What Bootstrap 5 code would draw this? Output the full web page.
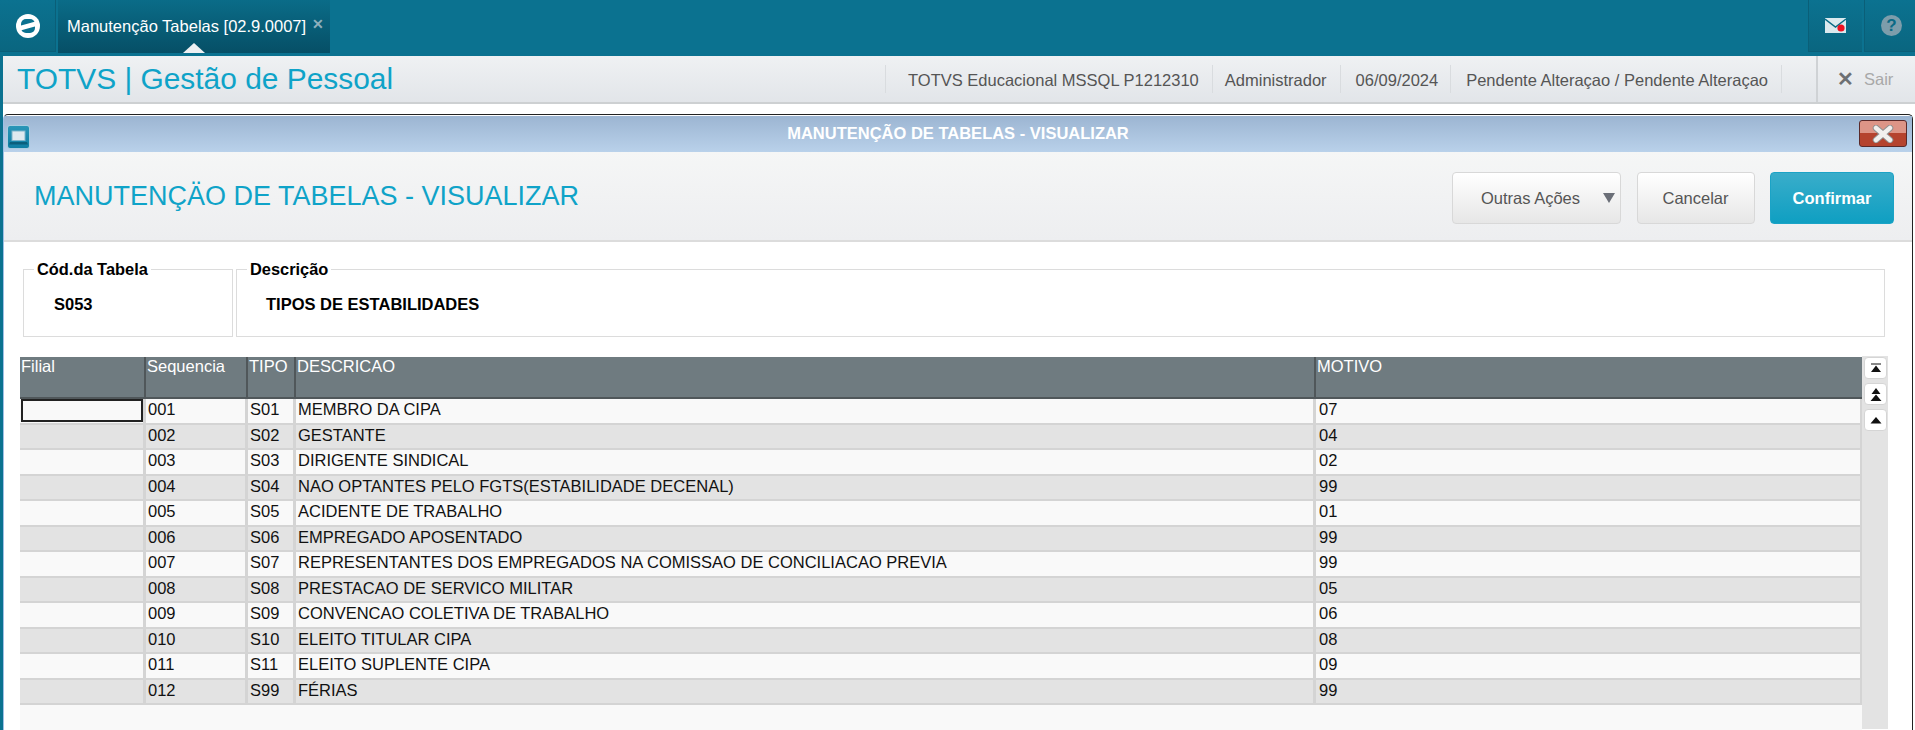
<!DOCTYPE html>
<html lang="pt-BR">
<head>
<meta charset="utf-8">
<title>Manutenção Tabelas</title>
<link href="https://cdn.jsdelivr.net/npm/bootstrap@5.3.0/dist/css/bootstrap.min.css" rel="stylesheet">
<style>
html,body{height:730px;overflow:hidden;background:#fff;font-family:"Liberation Sans",Arial,sans-serif;}
.topbar{height:56px;background:#0b7290;}
.logo-tile{width:56px;height:52px;background:linear-gradient(#0b7290,#0a6680);border-right:1px solid #0a5f78;border-bottom:1px solid #0a5f78;}
.app-tab{width:272px;height:53px;margin-left:2px;background:linear-gradient(#0a6c88,#064f66);color:#fff;font-size:16.5px;padding-left:9px;position:relative;}
.app-tab .tab-x{color:#8fb0bc;font-size:14px;font-weight:700;margin-left:6px;margin-top:-4px;}
.tab-arrow{position:absolute;left:125px;bottom:0;width:0;height:0;border-left:11px solid transparent;border-right:11px solid transparent;border-bottom:10px solid #eef0f2;}
.side-tile{width:54px;height:52px;background:linear-gradient(#0b7290,#0a6680);border-bottom:1px solid #0a5f78;border-left:1px solid #0a5f78;}
.help-tile{width:51px;margin-left:2px;padding-left:3px;}
.help-dot{width:21px;height:21px;border-radius:50%;background:#7d9dab;color:#0b6a85;font-weight:700;font-size:17px;line-height:21px;text-align:center;}
.stage{border-left:3px solid #0b7290;height:674px;}
.appbar{height:48px;background:linear-gradient(#eff1f3,#e2e5e9);border-bottom:2px solid #cdd0d2;}
.app-name{font-size:29.9px;color:#0fa3c8;padding-left:14px;line-height:46px;}
.info-cell{font-size:16.5px;color:#555;padding:2px 13px 0 15px;height:28px;line-height:27px;border-left:1px solid #d9dcdf;white-space:nowrap;}
.info-cell.first-info{padding-left:22px;}
.info-cell.admin-info{padding-left:12px;}
.info-cell.date-info{padding-right:12px;}
.info-cell.last-info{border-right:1px solid #d9dcdf;padding-right:13px;padding-left:15px;}
.sair-cell{width:99px;height:46px;margin-left:34px;border-left:2px solid #cfd2d5;color:#a8a8a8;font-size:16.5px;padding-left:19px;}
.sair-x{color:#6d7073;font-size:20px;font-weight:700;margin-right:10px;line-height:1;}
.win{margin-top:10px;margin-right:2px;height:616px;border:1px solid #222;border-bottom:0;border-radius:5px 5px 0 0;border-left-color:#9fc0e6;background:#fff;}
.win-title{height:36px;margin-top:1px;padding-bottom:2px;background:linear-gradient(#9cb5d2,#b9d1ea);color:#fff;font-weight:700;font-size:16.5px;position:relative;}
.win-ico{position:absolute;left:3px;top:9px;width:23px;height:24px;border-radius:3px;background:linear-gradient(#2a96b8,#0f7ea3);border:1px solid #a9cde0;}
.win-close{position:absolute;right:5px;top:4px;width:48px;height:27px;border:1px solid #5a2a2a;border-radius:3px;background:linear-gradient(#dd9587 0 48%,#b5432e 48% 100%);}
.form-head{height:90px;background:linear-gradient(#f5f6f6,#edeef0);border-bottom:2px solid #dcdcdc;padding:4px 18px 0 30px;}
.form-title{font-size:27px;color:#0fa3c8;margin-bottom:4px;}
.act-gap{gap:15.5px;}
.act-btn{height:52px;font-size:16.5px;color:#555;border:1px solid #d8d8d8;border-radius:4px;background:linear-gradient(#fff,#e6e6e6);padding:0;}
.act-more{width:169px;text-align:left;padding-left:28px;position:relative;}
.act-more::after{content:"";position:absolute;right:5px;top:20px;border-left:6px solid transparent;border-right:6px solid transparent;border-top:10px solid #6b6f78;}
.act-cancel{width:118px;}
.act-ok{width:124px;color:#fff;font-weight:700;border-color:#1ba3c6;background:linear-gradient(#39adca,#0f9fc2);}
.fields{padding:27px 27px 0 19px;gap:3px;}
.fset{height:68px;border:1px solid #dcdcdc;padding:24px 0 0 29px;position:relative;font-size:16.5px;font-weight:700;color:#000;line-height:20px;}
.fset-code{width:210px;padding-left:30px;}
.fset-desc{width:1649px;}
.fset-leg{position:absolute;left:10px;top:-10px;background:#fff;padding:0 3px;font-size:16.4px;line-height:18px;}
.grid-wrap{padding:20px 0 0 16px;}
.grid-main{width:1842px;height:373px;background:#f9f9f9;}
.grid-row{height:25.5px;font-size:16.5px;color:#111;background:#f9f9f9;border-bottom:2px solid #d4d4d4;line-height:21px;}
.grid-row.alt{background:#e3e3e3;}
.grid-head{height:42px;background:#6f7b80;color:#fff;border-bottom:2px solid #50575a;}
.gc{padding:0 0 0 2px;overflow:hidden;white-space:nowrap;border-right:3px solid #d4d4d4;height:100%;}
.grid-head .gc{border-right:2px solid #50575a;padding-left:1px;line-height:18px;}
.grid-head .c2{padding-left:1px;}
.c1{width:126px;flex:none;}.c2{width:102px;flex:none;}.c3{width:48px;flex:none;}.c4{width:1020px;flex:none;}.c5{flex:1 1 0;border-right:2px solid #d4d4d4;padding-left:3px;}
.grid-head .c5{border-right:0;}
.focus-cell{outline:2px solid #222;outline-offset:-2px;height:23px;width:122px;margin-left:1px;}
.scroller{width:26px;height:373px;background:#e3e3e3;padding:1px 0 0 2px;margin-top:-1px;}
.scroll-btn{width:23px;height:22px;background:#fff;border:1px solid #d5d5d5;border-radius:4px;margin-bottom:4px;padding:0;}
</style>
</head>
<body>
<header class="topbar d-flex justify-content-between">
  <div class="d-flex">
    <div class="logo-tile d-flex align-items-center justify-content-center">
      <svg width="24" height="24" viewBox="0 0 24 24"><circle cx="12" cy="12" r="12" fill="#fff"/><rect x="5" y="5" width="14" height="14" rx="5" fill="#0b7290"/><path d="M3 14.500 L21 9.500" stroke="#fff" stroke-width="4.500"/></svg>
    </div>
    <div class="app-tab d-flex align-items-center">Manutenção Tabelas [02.9.0007]<span class="tab-x">✕</span><span class="tab-arrow"></span></div>
  </div>
  <div class="d-flex">
    <div class="side-tile d-flex align-items-center justify-content-center">
      <svg width="22" height="16" viewBox="0 0 22 16"><rect width="21" height="15" fill="#dbe9ee"/><path d="M0 1 L10.500 9 L21 1" fill="none" stroke="#0a6a85" stroke-width="1.400"/><circle cx="16" cy="10" r="3.600" fill="#f01020"/></svg>
    </div>
    <div class="side-tile help-tile d-flex align-items-center justify-content-center"><div class="help-dot">?</div></div>
  </div>
</header>
<div class="stage">
  <div class="appbar d-flex align-items-center justify-content-between">
    <div class="app-name">TOTVS | Gestão de Pessoal</div>
    <div class="d-flex align-items-center">
      <div class="info-cell first-info">TOTVS Educacional MSSQL P1212310</div>
      <div class="info-cell admin-info">Administrador</div>
      <div class="info-cell date-info">06/09/2024</div>
      <div class="info-cell last-info">Pendente Alteraçao / Pendente Alteraçao</div>
      <div class="sair-cell d-flex align-items-center"><span class="sair-x">✕</span>Sair</div>
    </div>
  </div>
  <section class="win">
    <div class="win-title d-flex align-items-center justify-content-center">
      <span class="win-ico d-flex align-items-center justify-content-center"><svg width="19" height="15" viewBox="0 0 19 15"><rect x="3" y="1" width="13" height="9.500" fill="#dfeaef" stroke="#7fb6cc"/><path d="M1 12h17l1 2.500H0z" fill="#0a5f7c"/></svg></span>
      MANUTENÇÃO DE TABELAS - VISUALIZAR
      <span class="win-close d-flex align-items-center justify-content-center"><svg width="24" height="18" viewBox="0 0 24 18"><path d="M5 3 L19 15 M19 3 L5 15" stroke="#8f8f8f" stroke-width="6.500" stroke-linecap="round"/><path d="M5 3 L19 15 M19 3 L5 15" stroke="#f2f0ee" stroke-width="4.500" stroke-linecap="round"/></svg></span>
    </div>
    <div class="form-head d-flex align-items-center justify-content-between">
      <div class="form-title">MANUTENÇÄO DE TABELAS - VISUALIZAR</div>
      <div class="d-flex act-gap">
        <button type="button" class="btn act-btn act-more">Outras Ações</button>
        <button type="button" class="btn act-btn act-cancel">Cancelar</button>
        <button type="button" class="btn act-btn act-ok">Confirmar</button>
      </div>
    </div>
    <div class="fields d-flex">
      <div class="fset fset-code"><span class="fset-leg">Cód.da Tabela</span>S053</div>
      <div class="fset fset-desc"><span class="fset-leg">Descrição</span>TIPOS DE ESTABILIDADES</div>
    </div>
    <div class="grid-wrap d-flex">
      <div class="grid-main">
        <div class="d-flex grid-row grid-head"><div class="gc c1">Filial</div><div class="gc c2">Sequencia</div><div class="gc c3">TIPO</div><div class="gc c4">DESCRICAO</div><div class="gc c5">MOTIVO</div></div>
        <div class="d-flex grid-row"><div class="gc c1 p-0"><div class="focus-cell"></div></div><div class="gc c2">001</div><div class="gc c3">S01</div><div class="gc c4">MEMBRO DA CIPA</div><div class="gc c5">07</div></div>
        <div class="d-flex grid-row alt"><div class="gc c1"></div><div class="gc c2">002</div><div class="gc c3">S02</div><div class="gc c4">GESTANTE</div><div class="gc c5">04</div></div>
        <div class="d-flex grid-row"><div class="gc c1"></div><div class="gc c2">003</div><div class="gc c3">S03</div><div class="gc c4">DIRIGENTE SINDICAL</div><div class="gc c5">02</div></div>
        <div class="d-flex grid-row alt"><div class="gc c1"></div><div class="gc c2">004</div><div class="gc c3">S04</div><div class="gc c4">NAO OPTANTES PELO FGTS(ESTABILIDADE DECENAL)</div><div class="gc c5">99</div></div>
        <div class="d-flex grid-row"><div class="gc c1"></div><div class="gc c2">005</div><div class="gc c3">S05</div><div class="gc c4">ACIDENTE DE TRABALHO</div><div class="gc c5">01</div></div>
        <div class="d-flex grid-row alt"><div class="gc c1"></div><div class="gc c2">006</div><div class="gc c3">S06</div><div class="gc c4">EMPREGADO APOSENTADO</div><div class="gc c5">99</div></div>
        <div class="d-flex grid-row"><div class="gc c1"></div><div class="gc c2">007</div><div class="gc c3">S07</div><div class="gc c4">REPRESENTANTES DOS EMPREGADOS NA COMISSAO DE CONCILIACAO PREVIA</div><div class="gc c5">99</div></div>
        <div class="d-flex grid-row alt"><div class="gc c1"></div><div class="gc c2">008</div><div class="gc c3">S08</div><div class="gc c4">PRESTACAO DE SERVICO MILITAR</div><div class="gc c5">05</div></div>
        <div class="d-flex grid-row"><div class="gc c1"></div><div class="gc c2">009</div><div class="gc c3">S09</div><div class="gc c4">CONVENCAO COLETIVA DE TRABALHO</div><div class="gc c5">06</div></div>
        <div class="d-flex grid-row alt"><div class="gc c1"></div><div class="gc c2">010</div><div class="gc c3">S10</div><div class="gc c4">ELEITO TITULAR CIPA</div><div class="gc c5">08</div></div>
        <div class="d-flex grid-row"><div class="gc c1"></div><div class="gc c2">011</div><div class="gc c3">S11</div><div class="gc c4">ELEITO SUPLENTE CIPA</div><div class="gc c5">09</div></div>
        <div class="d-flex grid-row alt"><div class="gc c1"></div><div class="gc c2">012</div><div class="gc c3">S99</div><div class="gc c4">FÉRIAS</div><div class="gc c5">99</div></div>
      </div>
      <div class="scroller d-flex flex-column">
        <button type="button" class="scroll-btn d-flex align-items-center justify-content-center" aria-label="Início"><svg width="12" height="10" viewBox="0 0 12 10"><path d="M1 0.500h10v1H1z M6 2.500l5 6.500H1z" fill="#111"/></svg></button>
        <button type="button" class="scroll-btn d-flex align-items-center justify-content-center" aria-label="Página acima"><svg width="12" height="13" viewBox="0 0 12 13"><path d="M6 0l4.500 6h-9z M6 6.500l5.500 6.500h-11z" fill="#111"/></svg></button>
        <button type="button" class="scroll-btn d-flex align-items-center justify-content-center" aria-label="Linha acima"><svg width="12" height="7" viewBox="0 0 12 7"><path d="M6 0l5.500 6.500h-11z" fill="#111"/></svg></button>
      </div>
    </div>
  </section>
</div>
</body>
</html>
